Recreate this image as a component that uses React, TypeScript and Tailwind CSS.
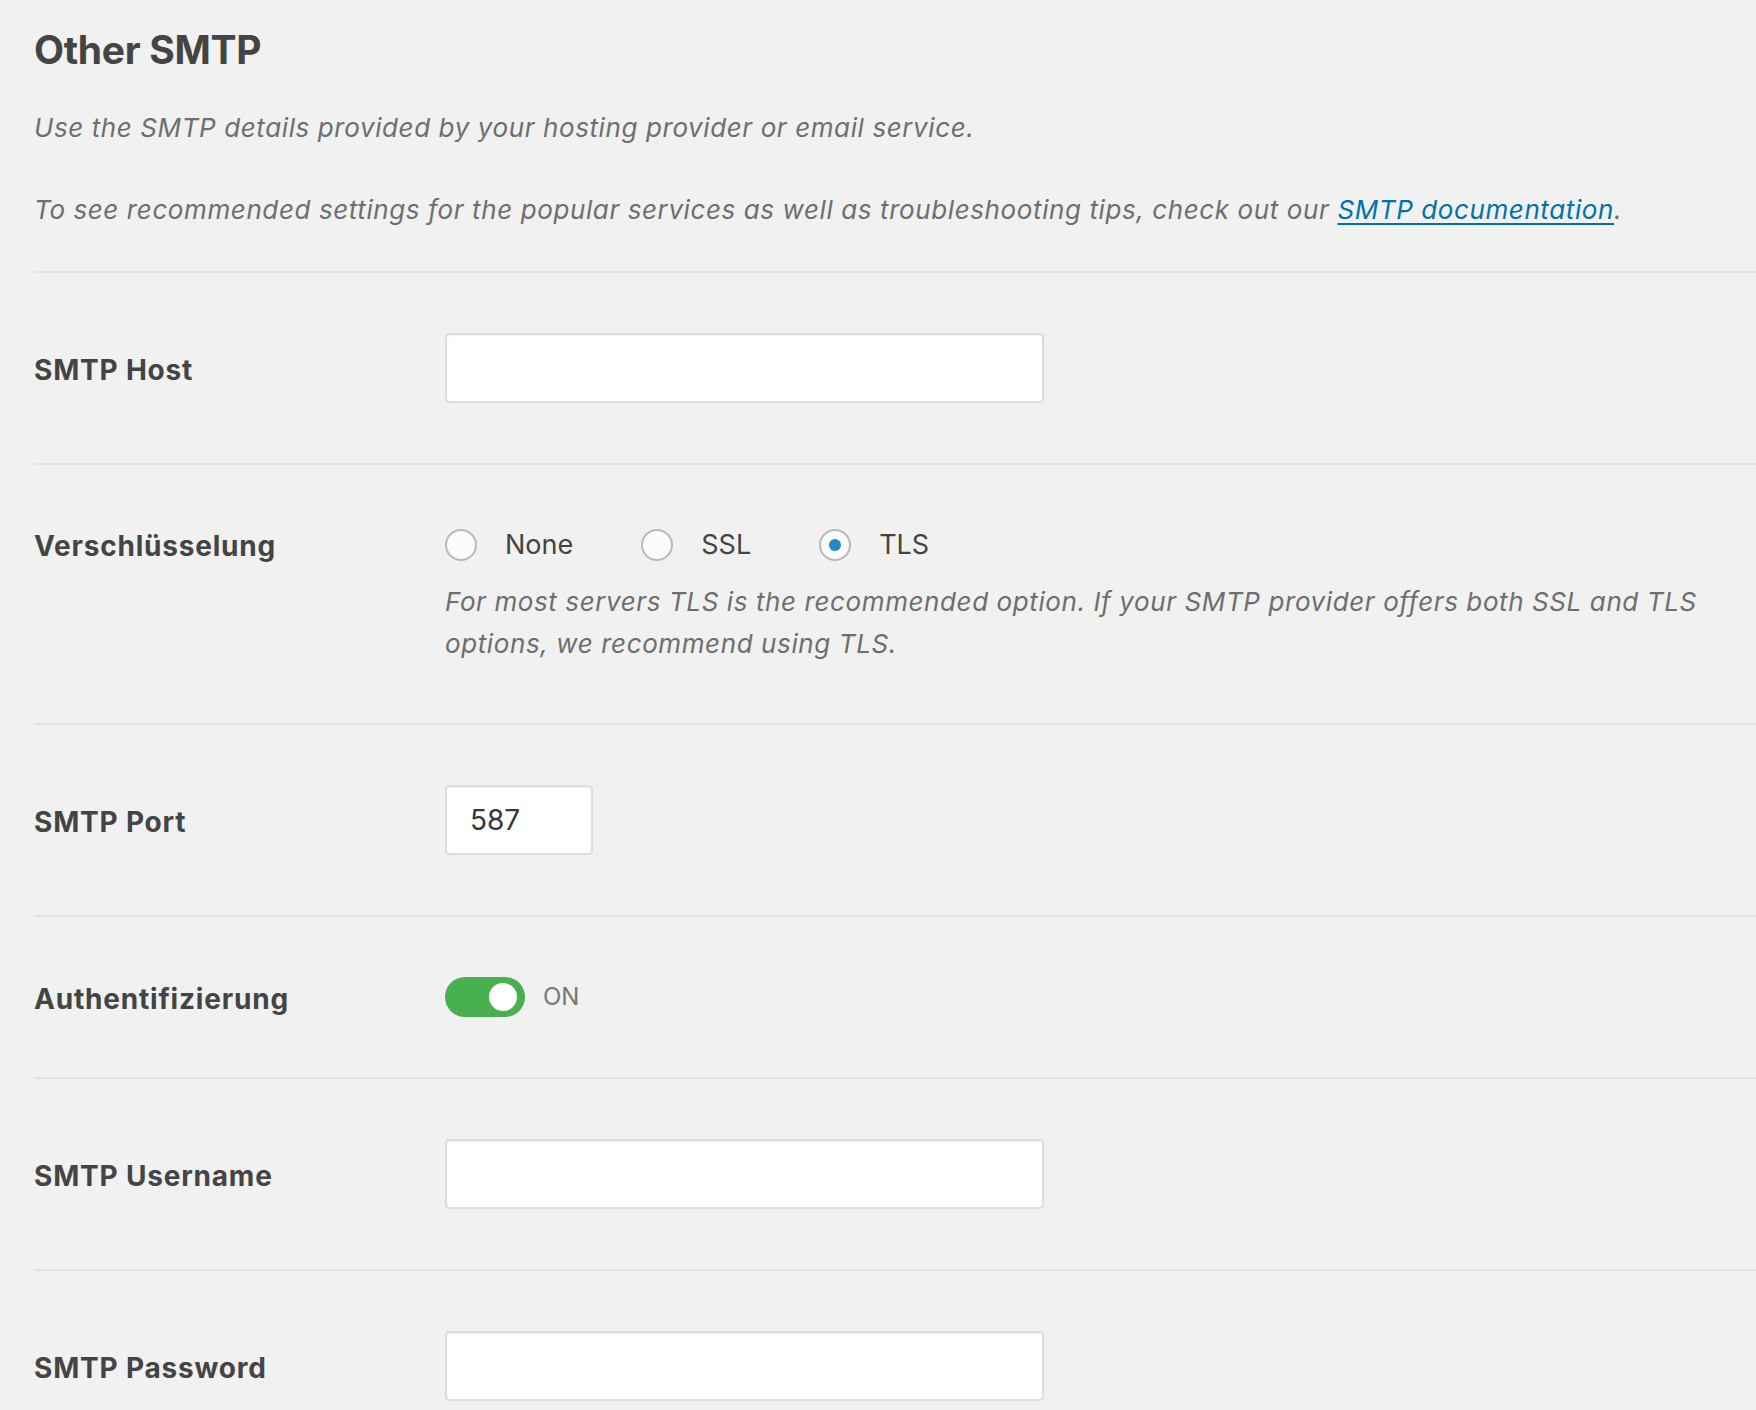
import React from "react";

function Label({ children, top }: { children: React.ReactNode; top?: boolean }) {
  return (
    <div
      className={`w-[411px] shrink-0 text-[28px] font-bold leading-[40px] tracking-[0.8px] text-[#444] ${top ? "mt-[1px]" : "translate-y-[2px]"}`}
    >
      {children}
    </div>
  );
}

function TextInput({ value, width = "w-[599px]" }: { value?: string; width?: string }) {
  return (
    <input
      type="text"
      defaultValue={value}
      className={`${width} h-[70px] rounded-[4px] border-2 border-[#dddddd] bg-white pl-[23px] text-[28px] text-[#32373c] shadow-[inset_0_1px_2px_rgba(0,0,0,0.07)] outline-none`}
    />
  );
}

function Radio({ label, checked }: { label: string; checked?: boolean }) {
  return (
    <label className="mr-[68px] flex items-center">
      <span className="flex h-[32px] w-[32px] items-center justify-center rounded-full border-2 border-[#b4b9be] bg-[#fbfbfb]">
        {checked && <span className="h-[12px] w-[12px] rounded-full bg-[#1e8cbe]" />}
      </span>
      <span className="ml-[28px] text-[27px] leading-[40px] text-[#444]">{label}</span>
    </label>
  );
}

export default function App() {
  return (
    <div
      className="min-h-[1410px] overflow-hidden bg-[#f1f1f1] pl-[34px] pt-[26px]"
      style={{ fontFamily: "Inter, 'Noto Sans', sans-serif" }}
    >
      <h2 className="text-[39px] font-bold leading-[48px] tracking-[-0.3px] text-[#444]">Other SMTP</h2>
      <p className="mt-[34px] text-[26px] italic leading-[40px] tracking-[0.6px] text-[#6e6e6e]">
        Use the SMTP details provided by your hosting provider or email service.
      </p>
      <p className="mt-[42px] text-[26px] italic leading-[40px] tracking-[0.6px] text-[#6e6e6e]">
        To see recommended settings for the popular services as well as troubleshooting tips, check out our{" "}
        <a href="#" className="text-[#0073aa] underline decoration-2 underline-offset-[4px]">
          SMTP documentation
        </a>
        .
      </p>

      <div className="mt-[41px] border-t-2 border-[#e2e2e2]">
        <div className="flex items-center border-b-2 border-[#e2e2e2] py-[60px]">
          <Label>SMTP Host</Label>
          <TextInput />
        </div>

        <div className="flex items-start border-b-2 border-[#e2e2e2] pb-[58px] pt-[60px]">
          <Label top>Verschlüsselung</Label>
          <div className="flex flex-col pr-[30px]">
            <div className="flex h-[40px] items-center">
              <Radio label="None" />
              <Radio label="SSL" />
              <Radio label="TLS" checked />
            </div>
            <p className="mt-[16px] text-[26px] italic leading-[42px] tracking-[0.6px] text-[#6e6e6e]">
              For most servers TLS is the recommended option. If your SMTP provider offers both SSL and TLS options, we recommend using TLS.
            </p>
          </div>
        </div>

        <div className="flex items-center border-b-2 border-[#e2e2e2] py-[60px]">
          <Label>SMTP Port</Label>
          <TextInput value="587" width="w-[148px]" />
        </div>

        <div className="flex items-center border-b-2 border-[#e2e2e2] py-[60px]">
          <Label>Authentifizierung</Label>
          <div className="flex items-center">
            <span className="relative h-[40px] w-[80px] rounded-full bg-[#49b04f]">
              <span className="absolute right-[8px] top-[6px] h-[28px] w-[28px] rounded-full bg-white" />
            </span>
            <span className="ml-[18px] text-[24px] leading-[40px] text-[#777]">ON</span>
          </div>
        </div>

        <div className="flex items-center border-b-2 border-[#e2e2e2] py-[60px]">
          <Label>SMTP Username</Label>
          <TextInput />
        </div>

        <div className="flex items-center border-b-2 border-[#e2e2e2] py-[60px]">
          <Label>SMTP Password</Label>
          <TextInput />
        </div>
      </div>
    </div>
  );
}
